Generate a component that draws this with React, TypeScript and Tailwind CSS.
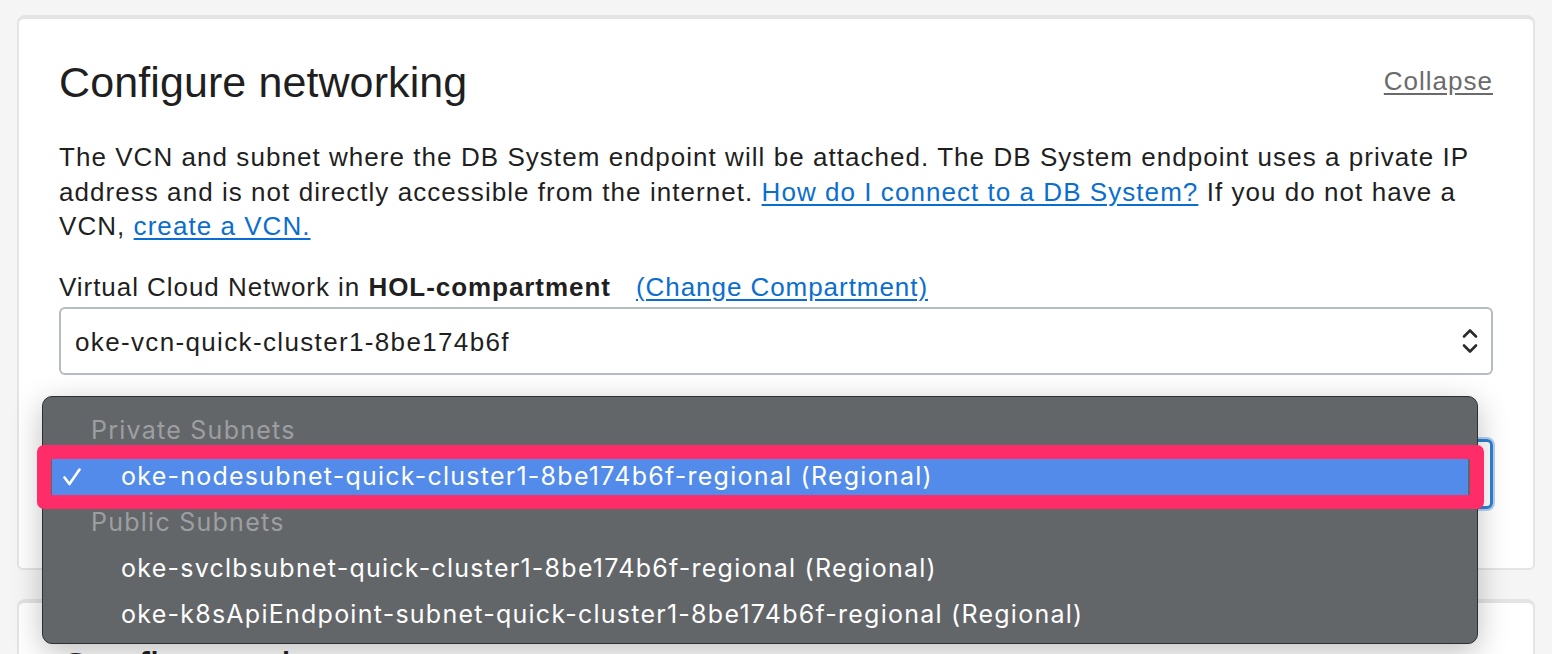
import React from "react";

const subnetsPrivate = ["oke-nodesubnet-quick-cluster1-8be174b6f-regional (Regional)"];
const subnetsPublic = [
  "oke-svclbsubnet-quick-cluster1-8be174b6f-regional (Regional)",
  "oke-k8sApiEndpoint-subnet-quick-cluster1-8be174b6f-regional (Regional)",
];

function Chevrons() {
  return (
    <svg width="18" height="30" viewBox="0 0 18 30" fill="none">
      <path d="M3 10.5 L9 4.5 L15 10.5" stroke="#2b2b2b" strokeWidth="2.6" strokeLinecap="round" strokeLinejoin="round" />
      <path d="M3 19.5 L9 25.5 L15 19.5" stroke="#2b2b2b" strokeWidth="2.6" strokeLinecap="round" strokeLinejoin="round" />
    </svg>
  );
}

function Check() {
  return (
    <svg width="18" height="18" viewBox="0 0 18 18" fill="none">
      <path d="M1.5 9.5 L6.5 16 L16.5 1.5" stroke="#fff" strokeWidth="2.6" strokeLinecap="round" strokeLinejoin="round" />
    </svg>
  );
}

function SubnetMenu() {
  return (
    <div className="absolute left-[23px] top-[377px] z-10 w-[1436px] h-[248px] rounded-[10px] border border-[#2e2f30] bg-[#636669] pt-[11px] shadow-[0_8px_30px_rgba(0,0,0,0.25)] font-['Inter',sans-serif] text-[25px] tracking-[1.25px] text-white">
      <div className="flex h-[46px] items-center pl-[48px] text-[#9c9ea1]">Private Subnets</div>
      {subnetsPrivate.map((s) => (
        <div key={s} className="flex h-[46px] items-center px-[9px]">
          <div className="relative flex h-[37px] w-full items-center bg-[#528bea]">
            <span className="flex w-[69px] pl-[11px]">
              <Check />
            </span>
            <span>{s}</span>
            <div className="pointer-events-none absolute -left-[15px] -right-[16px] -top-[14px] -bottom-[13px] rounded-[7px] border-[14px] border-[#fe2d6a]" />
          </div>
        </div>
      ))}
      <div className="flex h-[46px] items-center pl-[48px] text-[#9c9ea1]">Public Subnets</div>
      {subnetsPublic.map((s) => (
        <div key={s} className="flex h-[46px] items-center pl-[78px]">
          {s}
        </div>
      ))}
    </div>
  );
}

export default function App() {
  return (
    <div className="h-[654px] overflow-hidden bg-[#f5f5f5] pl-[17px] pr-[17px] pt-[15px] font-['Liberation_Sans',Arial,sans-serif] text-[#1f1f1f]">
      <div className="relative rounded-t-[8px] rounded-b-[6px] border-x-2 border-b-2 border-t-4 border-[#e4e4e7] bg-white px-[40px] pt-[42px] pb-[59px]">
        <div className="flex items-start justify-between">
          <h2 className="text-[43px] leading-[43px] tracking-[0.1px]">Configure networking</h2>
          <a href="#" className="mt-[3px] text-[26px] leading-[34px] tracking-[1px] text-[#6b6b6b] underline underline-offset-[3px]">
            Collapse
          </a>
        </div>
        <p className="mt-[36px] text-[26px] leading-[34.5px] tracking-[1.05px]">
          The VCN and subnet where the DB System endpoint will be attached. The DB System endpoint uses a private IP
          <br />
          address and is not directly accessible from the internet.{" "}
          <a href="#" className="text-[#0a6ed1] underline underline-offset-[3px]">How do I connect to a DB System?</a> If you do not have a
          <br />
          VCN,{" "}
          <a href="#" className="text-[#0a6ed1] underline underline-offset-[3px]">create a VCN.</a>
        </p>
        <div className="mt-[26px] flex items-baseline text-[26px] leading-[34px] tracking-[0.95px]">
          <span>
            Virtual Cloud Network in <b>HOL-compartment</b>
          </span>
          <a href="#" className="ml-[25px] text-[#0a6ed1] underline underline-offset-[3px]">(Change Compartment)</a>
        </div>
        <div className="mt-[3px] flex h-[68px] items-center justify-between rounded-[6px] border-2 border-[#b6bbc2] pl-[14px] pr-[12px] text-[26px] tracking-[1.35px]">
          <span className="mt-[3px]">oke-vcn-quick-cluster1-8be174b6f</span>
          <Chevrons />
        </div>
        <div className="mt-[64px] flex h-[70px] items-center justify-end rounded-[6px] border-[3px] border-[#2f7fd4] pr-[12px] shadow-[0_0_0_2px_rgba(47,127,212,0.35)]">
          <Chevrons />
        </div>
        <SubnetMenu />
      </div>
      <div className="mt-[29px] h-[200px] rounded-t-[8px] border-x-2 border-t-4 border-[#e4e4e7] bg-white px-[40px] pt-[43px]">
        <h2 className="text-[43px] leading-[43px]">Configure placement</h2>
      </div>
    </div>
  );
}
